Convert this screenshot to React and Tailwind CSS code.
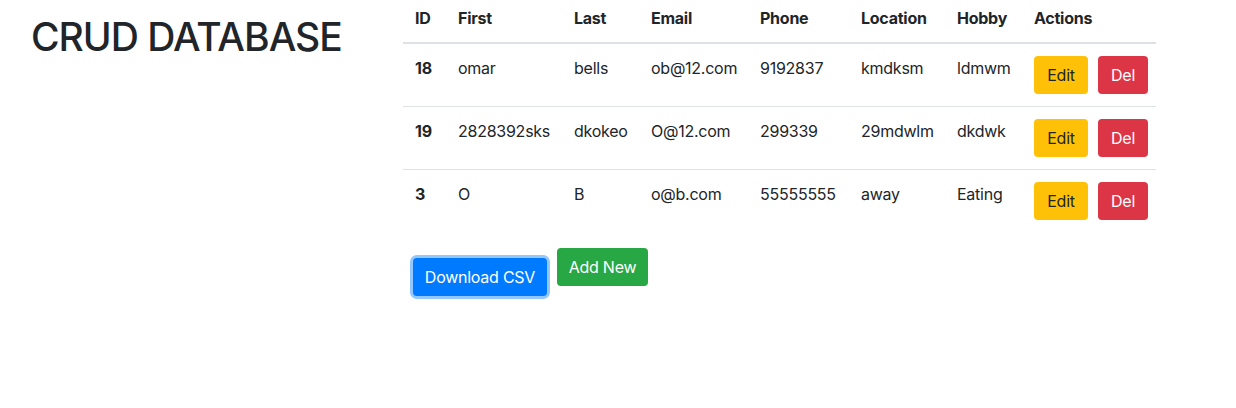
import React from "react";

const rows = [
  { id: "18", first: "omar", last: "bells", email: "ob@12.com", phone: "9192837", loc: "kmdksm", hobby: "ldmwm" },
  { id: "19", first: "2828392sks", last: "dkokeo", email: "O@12.com", phone: "299339", loc: "29mdwlm", hobby: "dkdwk" },
  { id: "3", first: "O", last: "B", email: "o@b.com", phone: "55555555", loc: "away", hobby: "Eating" },
];

const widths = ["w-[43px]", "w-[116px]", "w-[77px]", "w-[109px]", "w-[101px]", "w-[96px]", "w-[77px]", "w-[134px]"];
const heads = ["ID", "First", "Last", "Email", "Phone", "Location", "Hobby", "Actions"];

export default function App() {
  return (
    <div
      className="w-[1236px] h-[408px] bg-white text-[#212529] text-[16px] leading-6 flex tracking-[-0.25px]"
      style={{ fontFamily: "Inter, 'Noto Sans', sans-serif" }}
    >
      <div className="w-[403px] shrink-0 pl-[31px] pt-[13px]">
        <h1 className="text-[39px] leading-[48px] font-medium tracking-[-1px]">CRUD DATABASE</h1>
      </div>
      <div className="flex flex-col">
        <table className="w-[753px] table-fixed border-collapse mb-4">
          <colgroup>
            {widths.map((w, i) => (
              <col key={i} className={w} />
            ))}
          </colgroup>
          <thead>
            <tr>
              {heads.map((h) => (
                <th key={h} className="text-left font-bold px-3 pt-[6px] pb-3 border-b-2 border-[#dee2e6] whitespace-nowrap">
                  {h}
                </th>
              ))}
            </tr>
          </thead>
          <tbody>
            {rows.map((r, i) => (
              <tr key={r.id} className={i > 0 ? "border-t border-[#dee2e6]" : ""}>
                <th className="text-left font-bold p-3 align-top">{r.id}</th>
                <td className="p-3 align-top whitespace-nowrap">{r.first}</td>
                <td className="p-3 align-top whitespace-nowrap">{r.last}</td>
                <td className="p-3 align-top whitespace-nowrap">{r.email}</td>
                <td className="p-3 align-top whitespace-nowrap">{r.phone}</td>
                <td className="p-3 align-top whitespace-nowrap">{r.loc}</td>
                <td className="p-3 align-top whitespace-nowrap">{r.hobby}</td>
                <td className="py-3 pl-3 pr-0 align-top whitespace-nowrap">
                  <div className="flex gap-[10px]">
                    <button className="h-[38px] w-[54px] rounded-[4px] bg-[#ffc107] text-[#212529] leading-6">Edit</button>
                    <button className="h-[38px] w-[50px] rounded-[4px] bg-[#dc3545] text-white leading-6">Del</button>
                  </div>
                </td>
              </tr>
            ))}
          </tbody>
        </table>
        <div className="flex items-start">
          <button className="m-[10px] h-[38px] w-[134px] rounded-[4px] bg-[#007bff] text-white leading-6 shadow-[0_0_0_3px_rgba(38,143,255,0.5)]">
            Download CSV
          </button>
          <button className="h-[38px] w-[91px] rounded-[4px] bg-[#28a745] text-white leading-6">Add New</button>
        </div>
      </div>
    </div>
  );
}
